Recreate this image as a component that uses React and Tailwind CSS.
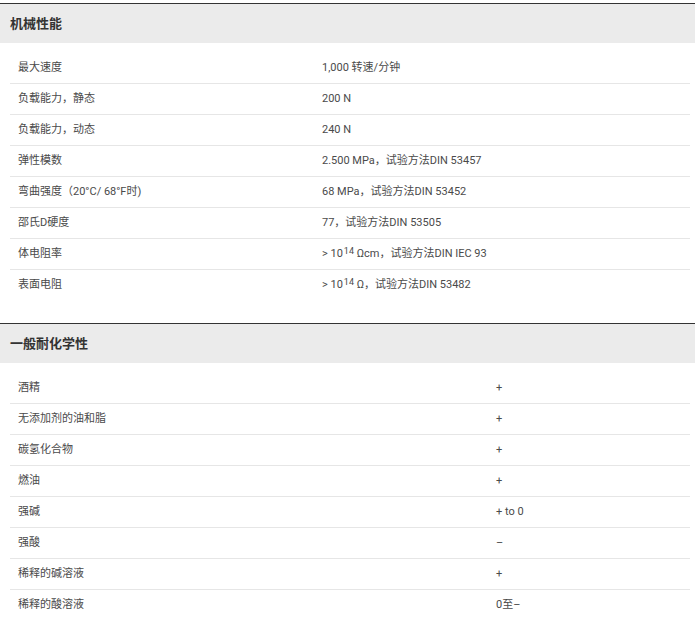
const mech = [
  ["最大速度", "1,000 转速/分钟"],
  ["负载能力，静态", "200 N"],
  ["负载能力，动态", "240 N"],
  ["弹性模数", "2.500 MPa，试验方法DIN 53457"],
  ["弯曲强度（20°C/ 68°F时)", "68 MPa，试验方法DIN 53452"],
  ["邵氏D硬度", "77，试验方法DIN 53505"],
  ["体电阻率", <>&gt; 10<sup className="text-[9px] relative -top-[3px] ml-[1px]">14</sup> Ωcm，试验方法DIN IEC 93</>],
  ["表面电阻", <>&gt; 10<sup className="text-[9px] relative -top-[3px] ml-[1px]">14</sup> Ω，试验方法DIN 53482</>],
]

const chem = [
  ["酒精", "+"],
  ["无添加剂的油和脂", "+"],
  ["碳氢化合物", "+"],
  ["燃油", "+"],
  ["强碱", "+ to 0"],
  ["强酸", "–"],
  ["稀释的碱溶液", "+"],
  ["稀释的酸溶液", "0至–"],
]

function Section({ title, rows, labelWidth, last }) {
  return (
    <div className={last ? "" : "pb-[22px]"}>
      <div className="border-t border-[#333] bg-[#ebebeb] h-[40px] flex items-center px-[10px] text-[13px] font-bold text-[#333]">
        {title}
      </div>
      <div className="ml-[10px] mr-[5px] mt-[10px]">
        {rows.map((r, i) => (
          <div
            key={i}
            className={"flex h-[31px] items-center text-[11px] text-[#4a4a4a] " + (i < rows.length - 1 ? "border-b border-[#e6e6e6]" : "")}
          >
            <div className={"pl-[8px] shrink-0 " + labelWidth}>{r[0]}</div>
            <div className="pl-[8px]">{r[1]}</div>
          </div>
        ))}
      </div>
    </div>
  )
}

export default function App() {
  return (
    <div
      className="bg-white w-[695px] h-[625px] pt-[3px] overflow-hidden"
      style={{ fontFamily: 'Roboto, "Noto Sans CJK SC", sans-serif' }}
    >
      <Section title="机械性能" rows={mech} labelWidth="w-[304px]" />
      <Section title="一般耐化学性" rows={chem} labelWidth="w-[478px]" last />
    </div>
  )
}
